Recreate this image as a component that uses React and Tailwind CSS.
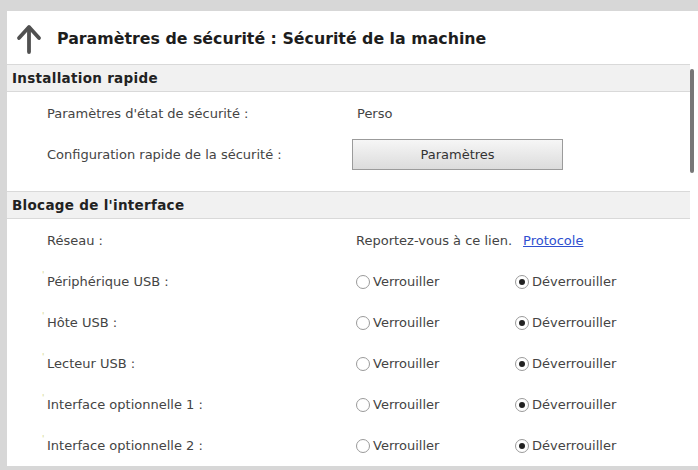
import React from "react";

const font = { fontFamily: '"DejaVu Sans", "Noto Sans", sans-serif' };

function Radio({ checked, label }) {
  return (
    <span className="flex items-center gap-[3px]">
      <span className="flex h-[14px] w-[14px] items-center justify-center rounded-full border border-[#9a9a9a] bg-white">
        {checked && <span className="h-[6px] w-[6px] rounded-full bg-[#222]" />}
      </span>
      <span>{label}</span>
    </span>
  );
}

function SectionHead({ children }) {
  return (
    <div className="flex h-[28px] items-center border-y border-[#d9d9d9] bg-[#f1f1f1] pl-[5px] text-[13.5px] font-bold tracking-[0.3px] text-[#222]">
      {children}
    </div>
  );
}

function Row({ label, mark, children }) {
  return (
    <div className="flex h-[41px] items-center">
      <div className="relative w-[345px] pl-[40px]">
        {mark && <span className="absolute left-[35px] top-[-3px] text-[9px] text-[#d6d98a]">'</span>}
        {label}
      </div>
      <div className="flex items-center">{children}</div>
    </div>
  );
}

const lockRows = ["Périphérique USB :", "Hôte USB :", "Lecteur USB :", "Interface optionnelle 1 :", "Interface optionnelle 2 :"];

export default function App() {
  return (
    <div className="h-[470px] w-[698px] overflow-hidden bg-[#d7d7d7] pl-[7px] pt-[11px]" style={font}>
      <div className="h-[455px] bg-white">
        {/* header */}
        <div className="flex h-[53px] items-center gap-[15px] pl-[9px] pt-[3px]">
          <svg width="26" height="30" viewBox="0 0 26 30" fill="none" stroke="#505050" strokeWidth="3.8" strokeLinecap="round" strokeLinejoin="round">
            <path d="M13 28V4" />
            <path d="M3 14L13 3l10 11" />
          </svg>
          <h1 className="text-[15.8px] font-semibold text-[#1d1d1d]">Paramètres de sécurité : Sécurité de la machine</h1>
        </div>

        <div className="flex">
          <div className="flex-1 text-[13px] text-[#444]">
            <SectionHead>Installation rapide</SectionHead>
            <div className="pt-[1px]">
              <Row label="Paramètres d'état de sécurité :">
                <span className="pl-[5px]">Perso</span>
              </Row>
              <Row label="Configuration rapide de la sécurité :">
                <button className="h-[31px] w-[211px] border border-[#9b9b9b] bg-gradient-to-b from-[#f6f6f6] to-[#dcdcdc] text-[13px] text-[#333]">
                  Paramètres
                </button>
              </Row>
            </div>
            <div className="h-[16px]" />
            <SectionHead>Blocage de l'interface</SectionHead>
            <div className="pt-[1px]">
              <Row label="Réseau :">
                <span className="pl-[4px]">Reportez-vous à ce lien.</span>
                <a href="#" className="ml-[11px] text-[#2f4fd0] underline">Protocole</a>
              </Row>
              {lockRows.map((l) => (
                <Row key={l} label={l} mark>
                  <span className="w-[163px] pl-[4px]">
                    <Radio label="Verrouiller" />
                  </span>
                  <Radio checked label="Déverrouiller" />
                </Row>
              ))}
            </div>
          </div>
          <div className="w-[8px] pt-[5px]">
            <div className="h-[104px] w-[4px] rounded-sm bg-[#777]" />
          </div>
        </div>
      </div>
    </div>
  );
}
